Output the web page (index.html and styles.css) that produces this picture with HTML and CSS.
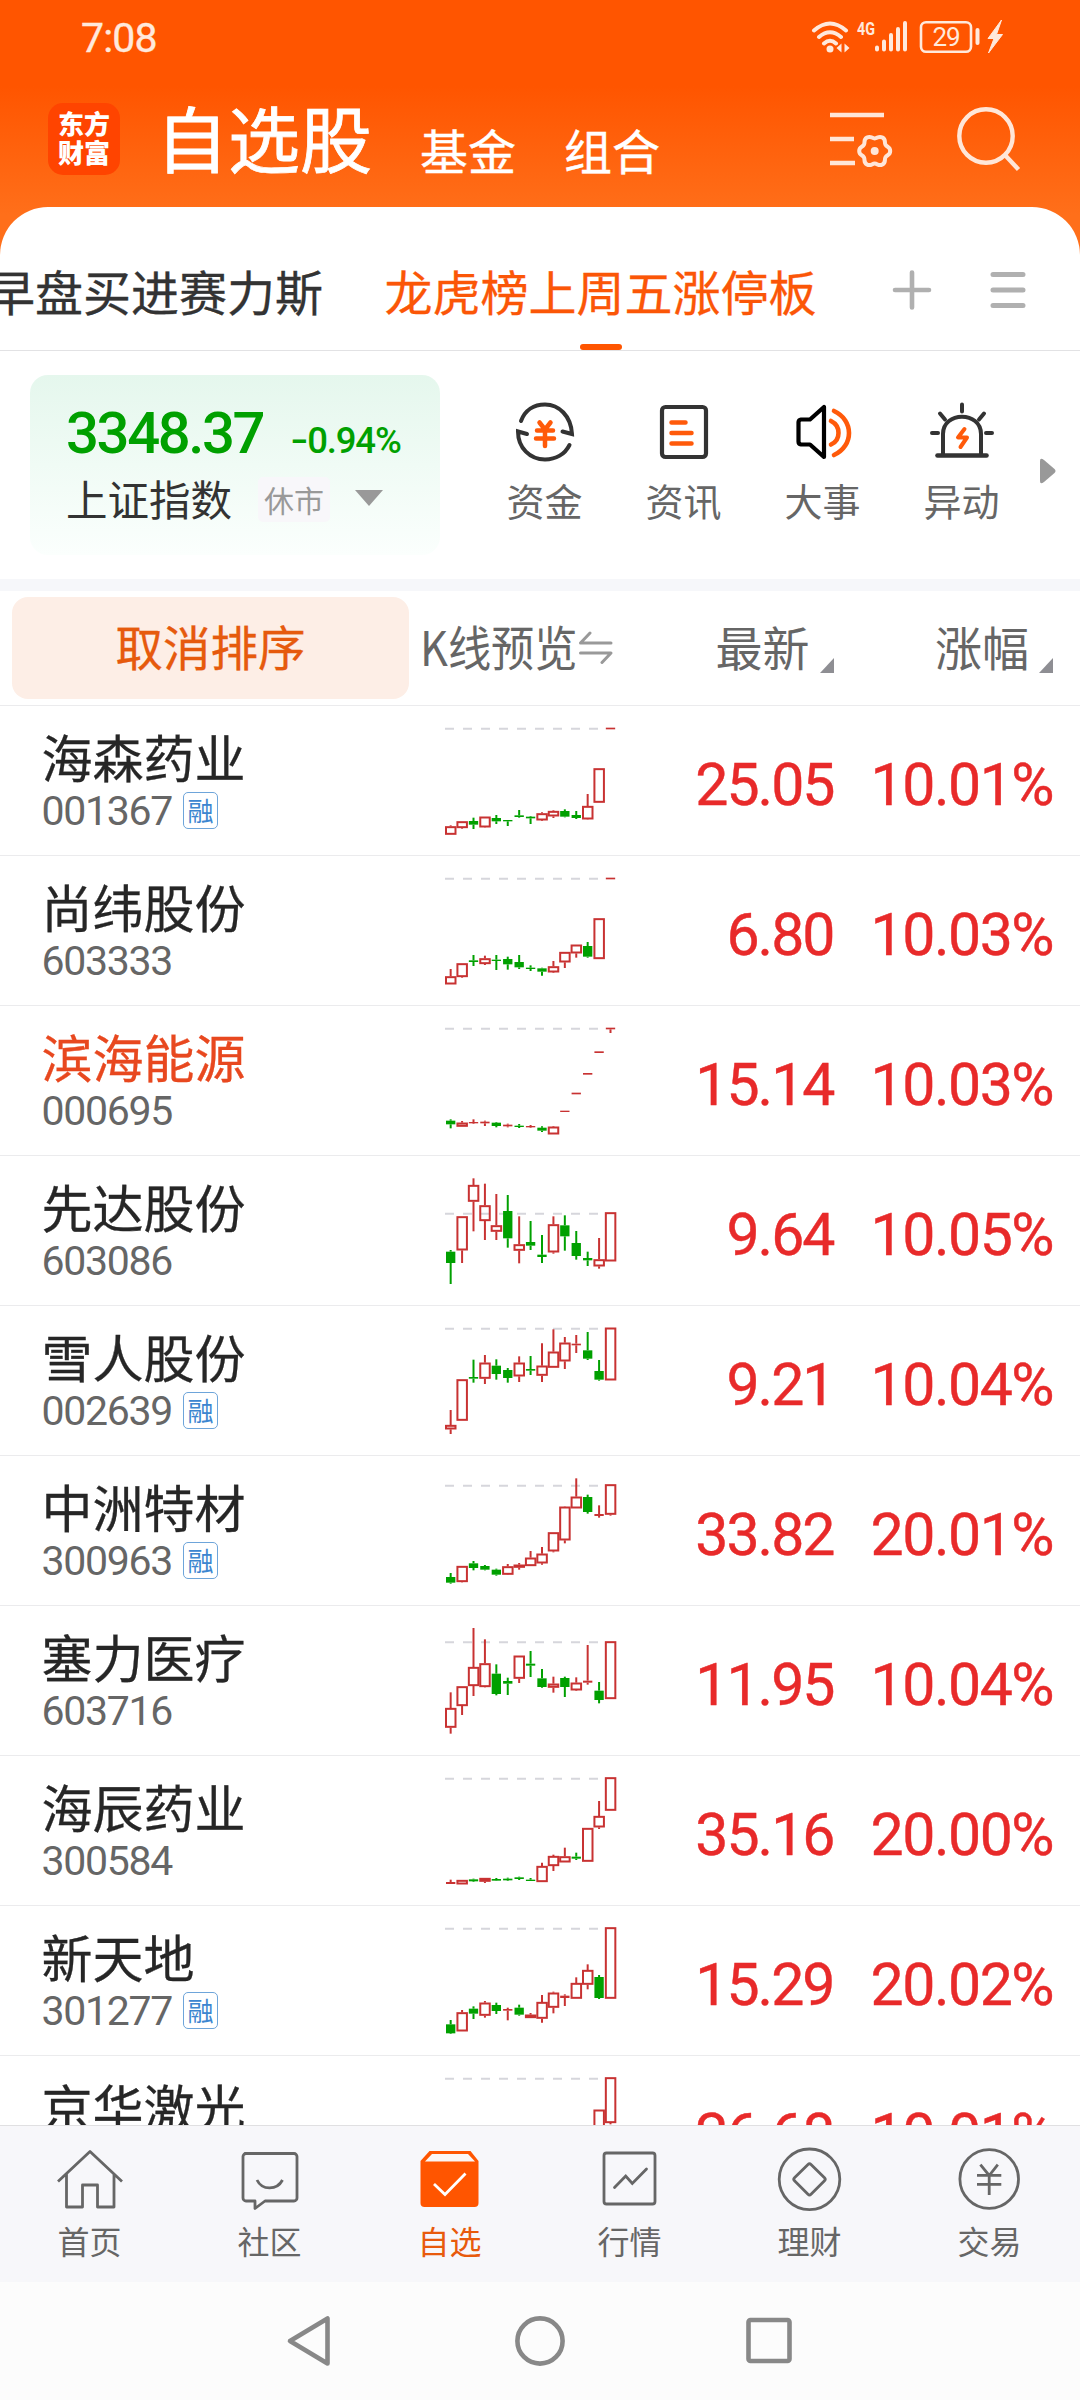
FILE: index.html
```html
<!DOCTYPE html>
<html lang="zh-CN">
<head>
<meta charset="utf-8">
<title>自选股</title>
<link rel="stylesheet" href="styles.css">
</head>
<body>
<div class="app">
  <header class="status">
    <span class="clock">7:08</span>
    <svg class="status-icons" width="200" height="40" viewBox="0 0 200 40">
      <g fill="none" stroke="#ffe9dc" stroke-width="4" stroke-linecap="round">
        <path d="M4 12.500Q20 -1.500 36 12.500M9 19Q20 9.500 31 19M14 25.500Q20 20 26 25.500"/>
      </g>
      <circle cx="20" cy="31" r="3.500" fill="#ffe9dc"/>
      <path d="M26.500 30l5-4.500v9zM39.500 30l-5-4.500v9z" fill="#ffe9dc"/>
      <text class="net" x="47" y="17" textLength="18" lengthAdjust="spacingAndGlyphs">4G</text>
      <g stroke="#ffe9dc" stroke-width="4" stroke-linecap="round">
        <path d="M67 29.500v2M74 23.500v8M81 17v14.500M88 11v20.500M95 5v26.500"/>
      </g>
      <rect x="111" y="4.200" width="50" height="29.500" rx="5" fill="none" stroke="#ffe9dc" stroke-width="2.600"/>
      <text class="battery" x="136" y="28" text-anchor="middle">29</text>
      <rect x="165.500" y="10" width="4" height="17" rx="2" fill="#ffe9dc"/>
      <path d="M191.500 2l-13.500 18.500h6l-5.500 14.500 14-18.500h-6z" fill="#ffe9dc" stroke="#ffe9dc" stroke-width="1"/>
    </svg>
  </header>

  <nav class="titlebar">
    <div class="logo"><span>东方</span><span>财富</span></div>
    <h1 class="title">自选股</h1>
    <span class="section fund">基金</span>
    <span class="section">组合</span>
    <div class="title-actions">
      <svg width="66" height="60" viewBox="0 0 66 60" fill="none" stroke="#ffe6d8" stroke-width="4.600">
        <path d="M1 5h54M1 29h24M1 53h25"/>
        <path stroke-width="4" transform="translate(45.700 41)" d="M15.500 0C15.500 4.500 12.300 3.650 10.800 6.250C9.300 8.850 11.650 11.150 7.750 13.400C3.850 15.650 3 12.500 0 12.500C-3 12.500 -3.850 15.650 -7.750 13.400C-11.650 11.150 -9.300 8.850 -10.800 6.250C-12.300 3.650 -15.500 4.500 -15.500 0C-15.500 -4.500 -12.300 -3.650 -10.800 -6.250C-9.300 -8.850 -11.650 -11.150 -7.750 -13.400C-3.850 -15.650 -3 -12.500 0 -12.500C3 -12.500 3.850 -15.650 7.750 -13.400C11.650 -11.150 9.300 -8.850 10.800 -6.250C12.300 -3.650 15.500 -4.500 15.500 0Z"/>
        <circle cx="45.700" cy="41" r="4" fill="#ffe6d8" stroke="none"/>
      </svg>
      <svg width="66" height="66" viewBox="0 0 66 66" fill="none" stroke="#ffe6d8" stroke-width="4.400">
        <circle cx="31" cy="31" r="26.700"/>
        <path d="M49 49L63.500 64.500"/>
      </svg>
    </div>
  </nav>

  <main class="sheet">
    <div class="tabs">
      <span class="tab">早盘买进赛力斯</span>
      <span class="tab active">龙虎榜上周五涨停板</span>
      <svg class="tab-add" width="40" height="40" viewBox="0 0 40 40" stroke="#b0b0b0" stroke-width="4.600" stroke-linecap="round">
        <path d="M20 2.500v35M3 20h34"/>
      </svg>
      <svg class="tab-menu" width="40" height="40" viewBox="0 0 40 40" stroke="#b0b0b0" stroke-width="5" stroke-linecap="round">
        <path d="M5 4.500h30M5 20h30M5 35.500h30"/>
      </svg>
    </div>

    <section class="overview">
      <div class="index-card">
        <div class="index-top"><b class="index-value">3348.37</b><b class="index-change"><span class="minus">-</span>0.94%</b></div>
        <div class="index-bottom">
          <span class="index-name">上证指数</span>
          <span class="market-state">休市</span>
          <svg width="28" height="16" viewBox="0 0 28 16"><path d="M0 0h28L14 16z" fill="#999"/></svg>
        </div>
      </div>
      <div class="shortcuts">
        <div class="shortcut">
          <svg width="70" height="64" viewBox="0 0 70 64" fill="none" stroke-linecap="round">
            <g stroke="#333" stroke-width="4">
              <path d="M11 21C15 10 24 4.500 35 4.500C49 4.500 61 16 62 34L52.500 31.500"/>
              <path d="M59.500 45C55 54 46 59.500 35 59.500C20 59.500 8 48 8 31.500L17 34"/>
            </g>
            <path stroke="#ff5a0a" stroke-width="4.500" d="M29.500 22.500l5.500 7 5.500-7M27 30.500h16M26 38.500h18M35 30v16"/>
          </svg>
          <span>资金</span>
        </div>
        <div class="shortcut">
          <svg width="70" height="64" viewBox="0 0 70 64" fill="none" stroke-linecap="round">
            <rect x="13" y="7" width="44" height="50" rx="3.500" stroke="#333" stroke-width="4.200"/>
            <path stroke="#ff5a0a" stroke-width="4.500" d="M22.500 22.500h14M22.500 33h20M22.500 43.500h20"/>
          </svg>
          <span>资讯</span>
        </div>
        <div class="shortcut">
          <svg width="70" height="64" viewBox="0 0 70 64" fill="none" stroke-linecap="round" stroke-linejoin="round">
            <path stroke="#000" stroke-width="4.200" d="M36 7v50L22 44.500H13a3 3 0 0 1-2.500-3V22a3 3 0 0 1 2.500-2.500h9z"/>
            <path stroke="#ff5a0a" stroke-width="4.600" d="M43 21C53 26 53 40 43 44.500M46 11C66 20 66 46 46 55"/>
          </svg>
          <span>大事</span>
        </div>
        <div class="shortcut">
          <svg width="70" height="64" viewBox="0 0 70 64" fill="none" stroke-linecap="round">
            <path stroke="#333" stroke-width="4" d="M16 55V34C16 11 54 11 54 34V55"/>
            <path stroke="#333" stroke-width="4.600" d="M10.500 55.500h49"/>
            <path stroke="#333" stroke-width="4" d="M35 4.500v7M13 13.500l5 6M57 13.500l-5 6M5 33h6M59 33h6"/>
            <path stroke="#ff5a0a" stroke-width="4" stroke-linejoin="round" d="M37.500 29L31 37.500h9L33.500 47"/>
          </svg>
          <span>异动</span>
        </div>
      </div>
      <svg class="more" width="16" height="26" viewBox="0 0 16 26"><path d="M0 3Q0 -1 4 2L14.500 11Q16.500 13 14.500 15L4 24Q0 27 0 23z" fill="#999"/></svg>
    </section>

    <div class="list-head">
      <span class="cancel-sort">取消排序</span>
      <span class="col-kline"><span class="kline-label">K线预览</span></span>
      <svg class="swap" width="36" height="34" viewBox="0 0 36 34" fill="none" stroke="#999" stroke-width="3" stroke-linecap="round" stroke-linejoin="round">
        <path d="M33 13H2.500L12 3M2.500 23H33L24 32.500"/>
      </svg>
      <span class="col-sort latest">最新<svg width="14" height="15" viewBox="0 0 14 15"><path d="M14 0v15H0z" fill="#8e8e93"/></svg></span>
      <span class="col-sort change">涨幅<svg width="14" height="15" viewBox="0 0 14 15"><path d="M14 0v15H0z" fill="#8e8e93"/></svg></span>
    </div>

    <section class="stocks">
      <article class="stock"><div class="who"><p class="name">海森药业</p><p class="code">001367<em class="tag">融</em></p></div><svg class="chart" data-code="001367"></svg><span class="price">25.05</span><span class="pct">10.01%</span></article>
      <article class="stock"><div class="who"><p class="name">尚纬股份</p><p class="code">603333</p></div><svg class="chart" data-code="603333"></svg><span class="price">6.80</span><span class="pct">10.03%</span></article>
      <article class="stock"><div class="who"><p class="name hot">滨海能源</p><p class="code">000695</p></div><svg class="chart" data-code="000695"></svg><span class="price">15.14</span><span class="pct">10.03%</span></article>
      <article class="stock"><div class="who"><p class="name">先达股份</p><p class="code">603086</p></div><svg class="chart" data-code="603086"></svg><span class="price">9.64</span><span class="pct">10.05%</span></article>
      <article class="stock"><div class="who"><p class="name">雪人股份</p><p class="code">002639<em class="tag">融</em></p></div><svg class="chart" data-code="002639"></svg><span class="price">9.21</span><span class="pct">10.04%</span></article>
      <article class="stock"><div class="who"><p class="name">中洲特材</p><p class="code">300963<em class="tag">融</em></p></div><svg class="chart" data-code="300963"></svg><span class="price">33.82</span><span class="pct">20.01%</span></article>
      <article class="stock"><div class="who"><p class="name">塞力医疗</p><p class="code">603716</p></div><svg class="chart" data-code="603716"></svg><span class="price">11.95</span><span class="pct">10.04%</span></article>
      <article class="stock"><div class="who"><p class="name">海辰药业</p><p class="code">300584</p></div><svg class="chart" data-code="300584"></svg><span class="price">35.16</span><span class="pct">20.00%</span></article>
      <article class="stock"><div class="who"><p class="name">新天地</p><p class="code">301277<em class="tag">融</em></p></div><svg class="chart" data-code="301277"></svg><span class="price">15.29</span><span class="pct">20.02%</span></article>
      <article class="stock"><div class="who"><p class="name">京华激光</p></div><svg class="chart" data-code="603607"></svg><span class="price">26.68</span><span class="pct">10.01%</span></article>
    </section>
  </main>

  <nav class="tabbar">
    <div class="nav-item">
      <svg width="72" height="72" viewBox="0 0 72 72" fill="none" stroke="#666" stroke-width="2.800" stroke-linejoin="round">
        <path d="M4 38.500L36 8.500L68 38.500M12.500 31V64H28.500V42H43.500V64H60V31"/>
      </svg><span>首页</span>
    </div>
    <div class="nav-item">
      <svg width="72" height="72" viewBox="0 0 72 72" fill="none" stroke="#666" stroke-width="2.800" stroke-linejoin="round">
        <path d="M11 10.500H60a3 3 0 0 1 3 3V55a3 3 0 0 1-3 3H31L21 65.500V58H12a3 3 0 0 1-3-3V13.500a3 3 0 0 1 3-3z"/>
        <path d="M23 37C28 47.500 43 47.500 48.500 37"/>
      </svg><span>社区</span>
    </div>
    <div class="nav-item on">
      <svg width="72" height="72" viewBox="0 0 72 72">
        <path d="M15.500 8H56.500L64.500 18V60a4 4 0 0 1-4 4H10.500a4 4 0 0 1-4-4V18z" fill="#ff5500"/>
        <path d="M18 11H54L61 18.500H11z" fill="#fbf6f4"/>
        <path d="M20 41L31 51.500L51.500 30.500" fill="none" stroke="#fff" stroke-width="2.800"/>
      </svg><span>自选</span>
    </div>
    <div class="nav-item">
      <svg width="72" height="72" viewBox="0 0 72 72" fill="none" stroke="#666" stroke-width="2.800">
        <rect x="10" y="10" width="51" height="51" rx="2.500"/>
        <path d="M20.500 44.500L31.700 33L38.300 40.500L52.500 26" stroke-linecap="round"/>
      </svg><span>行情</span>
    </div>
    <div class="nav-item">
      <svg width="72" height="72" viewBox="0 0 72 72" fill="none" stroke="#666" stroke-width="2.800" stroke-linejoin="round">
        <circle cx="35.500" cy="36.300" r="30.300"/>
        <path d="M34 21.500Q35.500 20 37 21.500L50.500 34.800Q52 36.300 50.500 37.800L37 51.200Q35.500 52.700 34 51.200L20.500 37.800Q19 36.300 20.500 34.800z"/>
      </svg><span>理财</span>
    </div>
    <div class="nav-item">
      <svg width="72" height="72" viewBox="0 0 72 72" fill="none" stroke="#666" stroke-width="2.800">
        <circle cx="35.200" cy="36" r="29.300"/>
        <path d="M26.400 21.700L35.200 32.500L43.800 21.700M23 32.300H47.300M23 41.300H47.300M35.200 32V52"/>
      </svg><span>交易</span>
    </div>
  </nav>

  <footer class="sysbar">
    <svg width="50" height="54" viewBox="0 0 50 54" fill="none" stroke="#888" stroke-width="4.600" stroke-linejoin="round">
      <path d="M42.500 4.500V49.500L5 27z"/>
    </svg>
    <svg width="54" height="54" viewBox="0 0 54 54" fill="none" stroke="#888" stroke-width="4.600"><circle cx="27" cy="27" r="22.600"/></svg>
    <svg width="54" height="54" viewBox="0 0 54 54" fill="none" stroke="#888" stroke-width="4.600"><rect x="5.500" y="6" width="41" height="41" rx="2"/></svg>
  </footer>
</div>
<script src="charts.js"></script>
</body>
</html>
```
FILE: styles.css
```css
* { box-sizing: border-box; margin: 0; padding: 0; }
body {
  width: 1080px;
  height: 2400px;
  overflow: hidden;
  font-family: "Noto Sans CJK SC", sans-serif;
  font-weight: 400;
  color: #262626;
}
svg { display: block; flex: none; }
span, p, b { white-space: nowrap; }

.app {
  display: flex;
  flex-direction: column;
  width: 1080px;
  height: 2400px;
  background: linear-gradient(#ff5500 0, #ff5500 86px, #ff6f1a 215px, #ff6f1a 300px);
}

/* system status bar */
.status { display: flex; justify-content: space-between; height: 80px; padding: 18px 70px 0 81px; }
.clock { font: 400 41px/41px Roboto, sans-serif; letter-spacing: -0.8px; color: #ffe9dc; -webkit-text-stroke: 0.4px; }
.net { font: 700 19px Roboto, sans-serif; fill: #ffe9dc; }
.battery { font: 400 26px Roboto, sans-serif; fill: #ffe9dc; letter-spacing: -1px; }

/* title bar */
.titlebar { display: flex; height: 127px; padding-left: 48px; color: #fff; }
.logo {
  display: flex; flex-direction: column; align-items: center;
  width: 72px; height: 72px; margin-top: 23px; padding-top: 5px;
  border-radius: 15px; background: #ff4400;
}
.logo span { font-size: 26px; line-height: 29px; font-weight: 900; }
.title { margin: 16px 0 0 36px; font-size: 72px; line-height: 80px; font-weight: 400; -webkit-text-stroke: 0.8px; }
.section { margin: 39px 0 0 48px; font-size: 48px; line-height: 60px; -webkit-text-stroke: 0.4px; }
.titlebar .fund { margin-left: 48px; }
.title-actions { display: flex; gap: 60px; margin-left: 169px; padding-top: 25px; }
.title-actions svg { margin-top: 5px; }
.title-actions svg + svg { margin-top: 0; }

/* white sheet */
.sheet { height: 1918px; overflow: hidden; border-radius: 48px 48px 0 0; background: #fff; }

.tabs { display: flex; height: 144px; padding-top: 62px; border-bottom: 1px solid #e2e2e4; margin-left: -13px; }
.tab { position: relative; height: 81px; font-size: 48px; line-height: 42px; color: #333; -webkit-text-stroke: 0.3px; }
.tab.active { margin-left: 61.500px; color: #fb5607; }
.tab.active::after {
  content: ""; position: absolute; left: 50%; bottom: 0; width: 42px; height: 6px;
  margin-left: -21px; border-radius: 3px; background: #ff5500;
}
.tab-add { margin: 1px 0 0 75px; }
.tab-menu { margin: 1px 0 0 56px; }

.overview { display: flex; height: 228px; padding: 24px 24px 0 30px; }
.index-card {
  width: 410px; height: 180px; padding: 25px 0 0 36px; border-radius: 18px;
  background: linear-gradient(#e5f7ed, #fbfffd);
}
.index-top { display: flex; align-items: baseline; height: 68px; line-height: 66px; font-family: Roboto, sans-serif; color: #00a000; }
.index-value { font-size: 58px; font-weight: 500; letter-spacing: -2.400px; }
.index-change { margin-left: 30px; font-size: 36.500px; font-weight: 500; letter-spacing: -1.200px; }
.minus { display: inline-block; margin-right: 3px; transform: scaleX(1.4); }
.index-bottom { display: flex; align-items: center; height: 60px; }
.index-name { font-size: 41.500px; line-height: 60px; color: #333; }
.market-state {
  width: 72px; height: 45px; margin: 2px 25px 0 26px; text-align: center;
  border-radius: 5px; background: #f8f7fa; font-size: 30px; line-height: 44px; color: #999;
}
.shortcuts { display: grid; grid-template-columns: repeat(4, 139px); margin-left: 35px; }
.shortcut { display: flex; flex-direction: column; align-items: center; padding-top: 25px; }
.shortcut span { margin-top: 15px; font-size: 38px; line-height: 42px; color: #666; }
.more { margin: 83px 0 0 9px; }

/* list header */
.list-head { display: flex; align-items: flex-start; height: 126px; border-top: 12px solid #f6f7fa; padding: 6px 0 0 12px; }
.cancel-sort {
  width: 397px; height: 102px; border-radius: 16px; background: #fdeee6;
  text-align: center; font-size: 47.500px; line-height: 97px; color: #e65a0d; -webkit-text-stroke: 0.3px;
}
.col-kline { width: 156px; margin-left: 11px; font-size: 48px; line-height: 97px; color: #666; }
.kline-label { display: inline-block; transform: scaleX(.9); transform-origin: left; }
.swap { margin: 33px 0 0 2px; }
.col-sort { display: flex; font-size: 47px; line-height: 97px; color: #666; }
.col-sort svg { margin: 61px 0 0 10px; }
.latest { margin-left: 101.500px; }
.change { margin-left: 110px; }
.list-head .change { margin-left: 111px; }
.latest svg, .change svg { margin-right: -9.500px; }

/* stock rows */
.stock { display: flex; height: 150px; border-top: 1px solid #ebebed; padding-left: 41.500px; }
.who { width: 388.500px; padding-top: 23px; }
.name { font-size: 51px; line-height: 54px; -webkit-text-stroke: 0.3px; }
.name.hot { color: #e8481f; }
.code { display: flex; align-items: center; height: 46px; margin-top: 5px; font: 400 41px/46px Roboto, sans-serif; letter-spacing: -1.300px; color: #666; }
.tag {
  width: 35px; height: 37px; margin: -1px 0 0 11px; border: 1.500px solid #6ea5da; border-radius: 5px;
  font: 400 26px/33px "Noto Sans CJK SC", sans-serif; letter-spacing: 0; text-align: center; color: #3c86d0;
}
.chart { width: 200px; height: 150px; margin-top: -1px; }
.price, .pct { font: 400 59px/60px Roboto, sans-serif; letter-spacing: -2px; color: #e82a2a; text-align: right; padding-top: 49px; -webkit-text-stroke: 0.4px; }
.price { width: 203.500px; }
.pct { width: 219.500px; letter-spacing: -1.500px; }

/* bottom navigation */
.tabbar { display: grid; grid-template-columns: repeat(6, 180px); height: 157px; border-top: 1px solid #e0e0e2; background: #f7f7fa; }
.nav-item { display: flex; flex-direction: column; align-items: center; padding-top: 17px; }
.nav-item span { margin: 6px 1px 0 0; font-size: 32px; line-height: 38px; color: #666; }
.nav-item.on span { color: #e85a0c; }

.sysbar { display: grid; grid-template-columns: repeat(3, 230px); justify-content: center; justify-items: center; height: 118px; padding-top: 32px; background: #fcfcfc; }
```
FILE: charts.js
```js
// Each candle: [direction, high, bodyTop, bodyBottom, low]; r = rise, g = fall.
// y values are in thirds of a pixel, measured from the top of the row.
const charts = {
  "001367": { ref: 69, k: "r 360 363 388 388,r 348 348 368 370,g 337 347 358 371,r 334 334 366 367,g 329 338 348 356,g 344 344 348 362,g 314 330 335 337,g 332 334 339 356,r 321 324 345 347,r 315 317 333 338,g 312 317 334 336,g 317 329 338 341,r 266 302 342 343,r 189 189 292 292,r 67 67 72 72" },
  "603333": { ref: 69, k: "r 341 363 387 387,r 324 324 365 367,g 299 315 320 332,r 301 309 326 329,g 299 313 317 344,g 304 311 327 343,g 299 320 336 341,g 330 337 341 347,g 337 339 349 361,r 317 333 351 353,r 290 290 321 338,r 268 268 294 307,g 260 272 304 307,r 189 189 311 311,r 67 67 72 72" },
  "000695": { ref: 69, k: "g 342 346 357 369,r 347 352 364 364,r 342 350 354 356,r 346 349 354 362,g 350 352 362 366,r 355 358 363 366,g 356 361 365 368,r 359 362 366 368,g 363 367 376 380,r 362 364 387 387,r 316 316 320 320,r 262 262 267 267,r 203 203 208 208,r 138 138 143 143,r 67 67 72 83" },
  "603086": { ref: 174, k: "g 284 289 323 386,r 183 183 285 323,r 69 89 139 228,r 85 150 197 254,r 116 210 229 254,g 119 167 249 277,r 183 267 286 324,g 197 260 271 284,g 239 298 305 323,r 183 207 291 295,g 180 210 243 286,g 227 263 302 313,g 289 308 315 332,r 248 312 333 340,r 171 171 318 318" },
  "002639": { ref: 69, k: "r 314 359 372 386,r 222 222 346 346,g 163 215 220 232,r 149 172 220 236,g 162 181 206 223,g 188 194 218 232,r 153 172 213 230,g 152 191 196 209,r 114 181 211 230,r 72 139 187 187,r 95 112 168 191,r 89 115 120 143,g 80 135 160 164,g 164 197 223 226,r 67 67 225 225" },
  "300963": { ref: 90, k: "g 353 365 382 385,r 332 332 380 381,g 317 324 338 345,g 329 332 343 345,g 340 343 358 361,r 326 333 358 359,r 323 328 337 343,r 287 307 332 332,r 275 295 324 328,r 231 231 288 291,r 153 154 255 264,r 69 124 159 159,g 118 125 170 175,r 150 176 182 187,r 87 87 178 181" },
  "603716": { ref: 110, k: "r 261 308 367 385,r 243 243 302 329,r 68 185 242 272,r 102 174 245 246,g 177 205 266 270,g 217 227 235 269,r 151 151 220 233,g 137 175 181 215,g 191 219 245 247,r 214 235 247 262,g 214 218 245 275,r 216 232 255 257,r 119 226 232 238,g 230 256 284 294,r 108 108 281 281" },
  "300584": { ref: 69, k: "r 373 380 386 386,r 374 374 387 387,g 370 372 378 380,r 368 368 379 383,g 368 371 376 377,g 367 370 375 377,g 364 366 371 374,g 368 373 377 377,r 322 332 380 380,r 298 302 332 347,r 277 303 321 321,g 292 304 310 314,r 218 218 319 319,r 137 182 216 221,r 66 66 166 166" },
  "301277": { ref: 69, k: "g 344 357 384 386,r 314 321 378 378,g 303 310 325 341,r 287 292 331 337,g 292 299 317 326,r 307 311 316 345,g 298 307 328 331,r 323 328 338 338,r 269 290 340 352,r 259 262 307 324,r 267 271 278 302,r 216 233 280 280,r 177 194 238 252,g 209 215 278 281,r 66 66 280 280" },
  "603607": { ref: 69, k: ",,,,,,,,,,,,,r 163 163 260 260,r 66 66 203 207" }
};

const RED = "#c83232";
const GREEN = "#00a000";

document.querySelectorAll(".chart").forEach((svg) => {
  const { ref, k } = charts[svg.dataset.code];
  svg.setAttribute("viewBox", "0 -1 600 450");
  let out = `<path d="M45 ${ref + 1}H506" stroke="#d6d6dc" stroke-width="6" stroke-dasharray="27 27"/>`;
  k.split(",").forEach((item, i) => {
    if (!item) return;
    const [dir, high, top, bottom, low] = item.split(" ").map((v, n) => (n ? +v : v));
    const x = 62 + 34.25 * i;
    const color = dir === "r" ? RED : GREEN;
    if (high < top) out += `<path d="M${x} ${high}V${top}" stroke="${color}" stroke-width="6"/>`;
    if (low > bottom) out += `<path d="M${x} ${bottom}V${low}" stroke="${color}" stroke-width="6"/>`;
    if (dir === "g" || bottom - top < 9) {
      out += `<rect x="${x - 14}" y="${top}" width="28" height="${bottom - top}" fill="${color}"/>`;
    } else {
      out += `<rect x="${x - 14}" y="${top + 2.5}" width="28.500" height="${bottom - top - 5}" fill="none" stroke="${color}" stroke-width="6"/>`;
    }
  });
  svg.innerHTML = out;
});
```
